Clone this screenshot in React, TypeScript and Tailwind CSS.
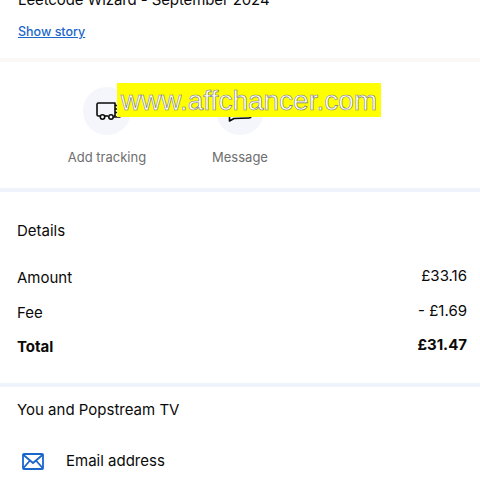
import React from "react";

function Truck() {
  return (
    <svg width="26" height="20" viewBox="0 0 26 20" fill="none" stroke="#0a0a0a" strokeWidth="1.6" className="ml-[3px]">
      <path d="M4 15H2.5A1.5 1.5 0 0 1 1 13.5V3.5A1.5 1.5 0 0 1 2.5 2H19V15H18" strokeLinejoin="round" />
      <path d="M9 15H12" />
      <circle cx="6.5" cy="16" r="2.2" fill="#fff" />
      <circle cx="15" cy="16" r="2.2" fill="#fff" />
      <path d="M19 4.5H22.5M19 8H22.5M19 11.5H22.5M18 16H24.5" />
    </svg>
  );
}

function Bubble() {
  return (
    <svg width="24" height="24" viewBox="0 0 24 24" fill="none" stroke="#0a0a0a" strokeWidth="1.6" className="mt-[2px]">
      <path d="M3 2H21A2 2 0 0 1 23 4V16A2 2 0 0 1 21 18L6 18.5L1.5 21V16V4A2 2 0 0 1 3 2Z" strokeLinejoin="round" />
    </svg>
  );
}

function Action({ icon, label }: { icon: React.ReactNode; label: string }) {
  return (
    <div className="flex flex-col items-center w-[100px]">
      <div className="w-12 h-12 rounded-full bg-[#f4f6fb] flex items-center justify-center">{icon}</div>
      <div className="mt-[12px] text-[13px] leading-[20px] text-[#6e6e6e]">{label}</div>
    </div>
  );
}

function Row({ l, r, bold }: { l: string; r: string; bold?: boolean }) {
  return (
    <div className={`flex justify-between items-start h-[34.5px] text-[15px] leading-[22px] text-[#0a0a0a] ${bold ? "font-bold" : ""}`}>
      <span className="mt-[3px]">{l}</span>
      <span className="mt-[1px] mr-[-4px]">{r}</span>
    </div>
  );
}

export default function App() {
  return (
    <div className="relative w-[480px] h-[480px] overflow-hidden bg-white font-['Inter','Liberation_Sans',sans-serif]">
      <section className="h-[58px] px-[18px] overflow-hidden">
        <div className="mt-[-11px] text-[15px] leading-[22px] tracking-[-0.1px] text-[#0a0a0a]">Leetcode Wizard - September 2024</div>
        <div className="mt-[11px] text-[12.5px] leading-[20px] font-medium text-[#1a66c9] underline">Show story</div>
      </section>
      <div className="h-1 bg-[#faf8f6]" />
      <section className="h-[126px] pt-[25px] flex pl-[57px] gap-[33px]">
        <Action icon={<Truck />} label="Add tracking" />
        <Action icon={<Bubble />} label="Message" />
      </section>
      <div className="h-1 bg-[#eff3fb]" />
      <section className="h-[191px] px-[17px] pt-[28px]">
        <div className="text-[15px] leading-[22px] text-[#0a0a0a]">Details</div>
        <div className="mt-[22px]">
          <Row l="Amount" r="£33.16" />
          <Row l="Fee" r="- £1.69" />
          <Row l="Total" r="£31.47" bold />
        </div>
      </section>
      <div className="h-1 bg-[#eff3fb]" />
      <section className="px-[17px] pt-[12px]">
        <div className="text-[15px] leading-[22px] text-[#0a0a0a]">You and Popstream TV</div>
        <div className="mt-[29px] flex items-center gap-[22px] pl-[5px]">
          <svg width="22" height="17" viewBox="0 0 22 17" fill="none" stroke="#1a66c9" strokeWidth="1.8">
            <rect x="1" y="1" width="20" height="15" rx="1" />
            <path d="M1 1.5L11 10L21 1.5M1 15.5L8 7.5M21 15.5L14 7.5" />
          </svg>
          <span className="text-[15px] leading-[22px] text-[#0a0a0a]">Email address</span>
        </div>
      </section>
      <div className="absolute left-[117px] top-[83px] w-[264px] h-[34px] pt-[1px] bg-[#ffff00] flex items-center justify-center text-[28px] text-white font-['Liberation_Sans',sans-serif] [-webkit-text-stroke:0.6px_#777]">
        www.affchancer.com
      </div>
    </div>
  );
}
